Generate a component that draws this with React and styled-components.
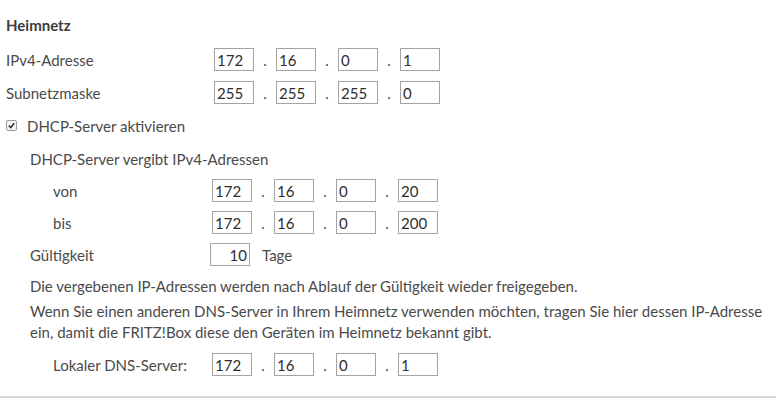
import React from 'react';
import styled, { createGlobalStyle } from 'styled-components';

const Global = createGlobalStyle`
    body {
        margin: 0;
        background: #fff;
        font-family: Lato, "Open Sans", sans-serif;
        color: #4a4a4a;
    }
`;

const Page = styled.div`
    width: 776px;
    height: 398px;
    border-bottom: 2px solid #d8d8d8;
    padding-top: 14px;
    box-sizing: border-box;
    font-size: 15px;
`;

const Heading = styled.h3`
    margin: 0 0 12px 6px;
    height: 22px;
    line-height: 22px;
    font-size: 15px;
    font-weight: bold;
    color: #3c3c3c;
`;

const Row = styled.div`
    display: flex;
    align-items: center;
    height: 23px;
    margin-bottom: ${p => p.gap ?? 10}px;
    padding-left: ${p => p.indent}px;
`;

const Label = styled.span`
    width: ${p => p.width}px;
    flex-shrink: 0;
`;

const Field = styled.input`
    width: 40px;
    height: 23px;
    box-sizing: border-box;
    border: 1px solid #a3a3a3;
    padding: 0 2px;
    margin: 0;
    font: inherit;
    font-size: 15px;
    color: #2e2e2e;
    background: #fff;
    text-align: ${p => (p.right ? 'right' : 'left')};
    outline: none;
`;

const Dot = styled.span`
    width: 22px;
    text-align: center;
`;

const Unit = styled.span`
    margin-left: 12px;
`;

const CheckRow = styled.label`
    display: flex;
    align-items: center;
    height: 23px;
    margin-bottom: 10px;
    padding-left: 6px;
`;

const Box = styled.span`
    width: 11px;
    height: 11px;
    box-sizing: border-box;
    border: 1px solid #9a9a9a;
    border-radius: 2px;
    background: #f4f4f4;
    display: flex;
    align-items: center;
    justify-content: center;
    margin-right: 10px;
`;

const Note = styled.p`
    margin: 0 0 ${p => p.gap ?? 0}px 30px;
    line-height: 21px;
    padding-right: 4px;
`;

const Ip = ({ parts }) => (
    <>
        {parts.map((v, i) => (
            <React.Fragment key={i}>
                {i > 0 && <Dot>.</Dot>}
                <Field defaultValue={v} />
            </React.Fragment>
        ))}
    </>
);

const App = () => {
    return (
        <Page>
            <Global />
            <Heading>Heimnetz</Heading>
            <Row indent={6}>
                <Label width={208}>IPv4-Adresse</Label>
                <Ip parts={['172', '16', '0', '1']} />
            </Row>
            <Row indent={6}>
                <Label width={208}>Subnetzmaske</Label>
                <Ip parts={['255', '255', '255', '0']} />
            </Row>
            <CheckRow>
                <Box>
                    <svg width="7" height="7" viewBox="0 0 7 7">
                        <path d="M0.8 3.6 L2.8 5.6 L6.2 1.2" fill="none" stroke="#333" strokeWidth="1.6" />
                    </svg>
                </Box>
                DHCP-Server aktivieren
            </CheckRow>
            <Row indent={30} gap={9}>DHCP-Server vergibt IPv4-Adressen</Row>
            <Row indent={53} gap={9}>
                <Label width={159}>von</Label>
                <Ip parts={['172', '16', '0', '20']} />
            </Row>
            <Row indent={53} gap={9}>
                <Label width={159}>bis</Label>
                <Ip parts={['172', '16', '0', '200']} />
            </Row>
            <Row indent={30} gap={10}>
                <Label width={180}>Gültigkeit</Label>
                <Field right defaultValue="10" />
                <Unit>Tage</Unit>
            </Row>
            <Note gap={4}>Die vergebenen IP-Adressen werden nach Ablauf der Gültigkeit wieder freigegeben.</Note>
            <Note gap={10}>
                Wenn Sie einen anderen DNS-Server in Ihrem Heimnetz verwenden möchten, tragen Sie hier dessen IP-Adresse
                ein, damit die FRITZ!Box diese den Geräten im Heimnetz bekannt gibt.
            </Note>
            <Row indent={53}>
                <Label width={159}>Lokaler DNS-Server:</Label>
                <Ip parts={['172', '16', '0', '1']} />
            </Row>
        </Page>
    );
};

export default App;
